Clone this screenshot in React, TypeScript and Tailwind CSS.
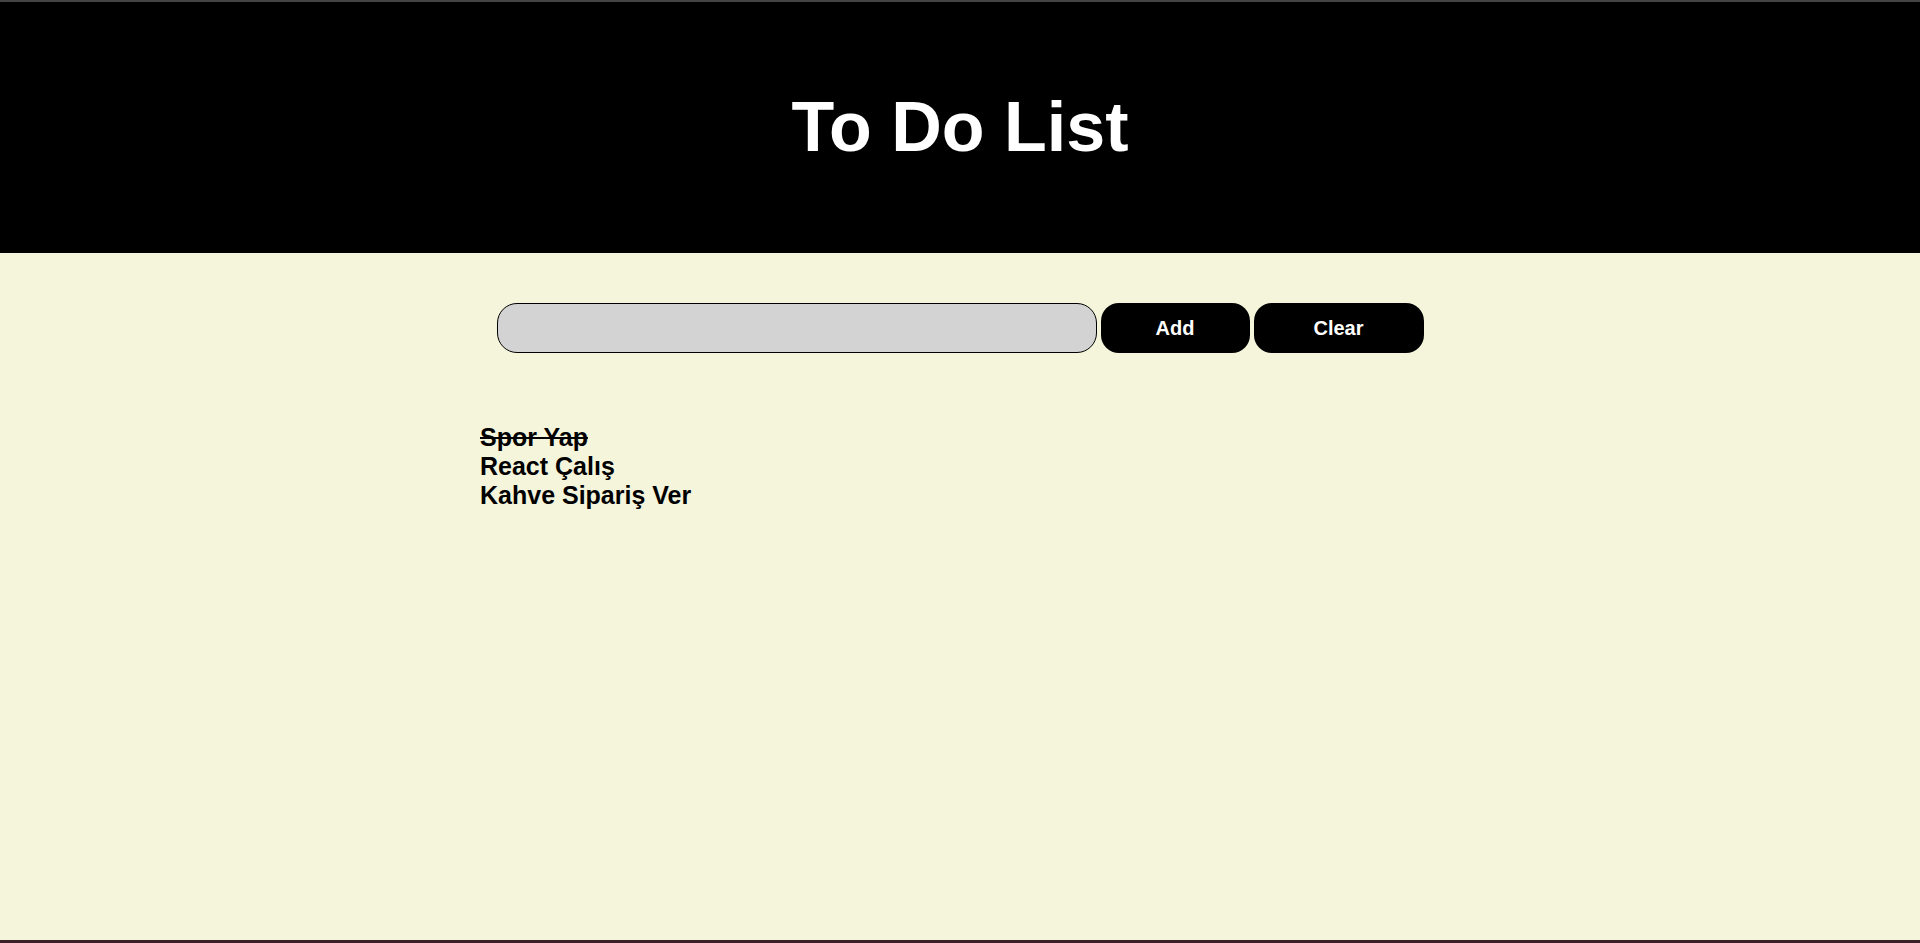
import { useState } from "react";

type Todo = { id: number; text: string; done: boolean };

const initialTodos: Todo[] = [
    { id: 1, text: "Spor Yap", done: true },
    { id: 2, text: "React Çalış", done: false },
    { id: 3, text: "Kahve Sipariş Ver", done: false },
];

const App = () => {
    const [todos, setTodos] = useState<Todo[]>(initialTodos);
    const [value, setValue] = useState("");

    const addTodo = () => {
        if (!value.trim()) return;
        setTodos((prev) => [...prev, { id: Date.now(), text: value.trim(), done: false }]);
        setValue("");
    };

    const toggle = (id: number) => {
        setTodos((prev) => prev.map((t) => (t.id === id ? { ...t, done: !t.done } : t)));
    };

    return (
        <div className="flex flex-col h-[943px] bg-[#f5f5dc] font-['Liberation_Sans',Arial,sans-serif]">
            <div className="h-[2px] bg-[#444444]" />

            {/* Header */}
            <header className="h-[251px] bg-black flex items-center justify-center">
                <h1 className="text-white text-[70px] font-bold">To Do List</h1>
            </header>

            {/* Form + list */}
            <main className="flex-1 w-[960px] mx-auto pt-[50px]">
                <div className="flex justify-center gap-[4px]">
                    <input
                        value={value}
                        onChange={(e) => setValue(e.target.value)}
                        className="w-[600px] h-[50px] bg-[#d3d3d3] border border-black rounded-[20px] px-4 text-lg outline-none"
                    />
                    <button
                        onClick={addTodo}
                        className="w-[149px] h-[50px] bg-black text-white text-[20px] font-bold rounded-[18px]"
                    >
                        Add
                    </button>
                    <button
                        onClick={() => setTodos([])}
                        className="w-[170px] h-[50px] bg-black text-white text-[20px] font-bold rounded-[18px]"
                    >
                        Clear
                    </button>
                </div>

                <ul className="mt-[70px]">
                    {todos.map((t) => (
                        <li
                            key={t.id}
                            onClick={() => toggle(t.id)}
                            className={`text-[25px] leading-[29px] font-bold text-black cursor-pointer ${
                                t.done ? "line-through" : ""
                            }`}
                        >
                            {t.text}
                        </li>
                    ))}
                </ul>
            </main>

            <div className="h-[3px] bg-[#3b1f27]" />
        </div>
    );
};

export default App;
